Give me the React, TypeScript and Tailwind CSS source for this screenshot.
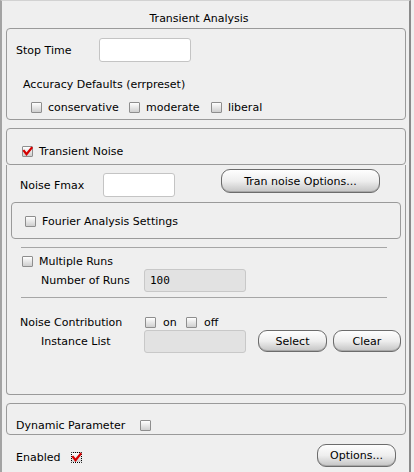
import React from "react";

function Check({ checked = false, focus = false }: { checked?: boolean; focus?: boolean }) {
  return (
    <span
      className={
        "relative inline-block w-[11px] h-[11px] shrink-0 rounded-[1px] bg-linear-to-b from-white to-[#cfcfcf] " +
        (focus ? "border border-dotted border-black" : "border border-[#8e8e8e]")
      }
    >
      {checked && (
        <svg className="absolute left-[-1px] top-[-1px]" width="11" height="11" viewBox="0 0 11 11">
          <path d="M2 5 L4.5 8.2 L9.5 2" fill="none" stroke="#d40000" strokeWidth="2.2" strokeLinecap="square" />
        </svg>
      )}
    </span>
  );
}

function Btn({ children, className = "" }: { children: React.ReactNode; className?: string }) {
  return (
    <div
      className={
        "flex items-center justify-center rounded-[9px] border border-[#6c6c6c] bg-linear-to-b from-[#fefefe] via-[#eeeeee] to-[#c4c4c4] shadow-[inset_0_-1px_0_#a8a8a8] " +
        className
      }
    >
      {children}
    </div>
  );
}

export default function App() {
  return (
    <div className="w-[414px] h-[472px] bg-[#efefef] font-['DejaVu_Sans',sans-serif] text-[11px] leading-[13px] text-black overflow-hidden">
      <div className="w-[411px] h-[472px] border-l-2 border-r-2 border-t border-l-[#a3a3a3] border-r-[#8a8a8a] border-t-[#d2d2d2] pl-[4px] pr-[3px] flex flex-col">
        {/* Title */}
        <div className="pt-[11px] h-[27px] text-center pr-[14px]">Transient Analysis</div>

        {/* Box 1 */}
        <div className="h-[92px] border border-[#9a9a9a] rounded-[4px] flex flex-col">
          <div className="mt-[9px] flex items-center h-[24px] pl-[9px]">
            <span className="w-[83px]">Stop Time</span>
            <div className="w-[92px] h-[24px] bg-white border border-[#c4c4c4] rounded-[3px]" />
          </div>
          <div className="mt-[16px] pl-[16px] h-[13px]">Accuracy Defaults (errpreset)</div>
          <div className="mt-[10px] pl-[24px] h-[13px] flex items-center">
            <div className="w-[98px] flex items-center gap-[6px]">
              <Check />
              <span>conservative</span>
            </div>
            <div className="w-[82px] flex items-center gap-[6px]">
              <Check />
              <span>moderate</span>
            </div>
            <div className="flex items-center gap-[6px]">
              <Check />
              <span>liberal</span>
            </div>
          </div>
        </div>

        {/* Transient Noise header */}
        <div className="mt-[8px] h-[37px] border border-[#9a9a9a] rounded-[4px] flex flex-col">
          <div className="mt-[16px] pl-[15px] h-[13px] flex items-center gap-[6px]">
            <Check checked />
            <span>Transient Noise</span>
          </div>
        </div>

        {/* Transient Noise body */}
        <div className="h-[230px] border-x border-b border-[#9a9a9a] rounded-b-[4px] flex flex-col">
          <div className="mt-[4px] h-[28px] flex items-start">
            <div className="mt-[4px] pl-[13px] flex items-center">
              <span className="w-[83px]">Noise Fmax</span>
              <div className="w-[72px] h-[24px] bg-white border border-[#c4c4c4] rounded-[3px]" />
            </div>
            <Btn className="ml-[46px] w-[159px] h-[24px]">Tran noise Options...</Btn>
          </div>

          <div className="mt-[5px] ml-[4px] w-[390px] h-[37px] border border-[#9a9a9a] rounded-[4px] flex flex-col">
            <div className="mt-[12px] pl-[13px] h-[13px] flex items-center gap-[6px]">
              <Check />
              <span>Fourier Analysis Settings</span>
            </div>
          </div>

          <div className="mt-[8px] ml-[14px] w-[366px] h-px bg-[#a6a6a6]" />

          <div className="mt-[7px] pl-[15px] h-[13px] flex items-center gap-[6px]">
            <Check />
            <span>Multiple Runs</span>
          </div>

          <div className="mt-[1px] pl-[34px] flex items-center h-[23px]">
            <span className="w-[103px]">Number of Runs</span>
            <div className="w-[102px] h-[23px] bg-[#e2e2e2] border border-[#c8c8c8] rounded-[3px] flex items-center pl-[5px] font-['DejaVu_Sans_Mono',monospace] text-[11px]">
              100
            </div>
          </div>

          <div className="mt-[5px] ml-[14px] w-[366px] h-px bg-[#a6a6a6]" />

          <div className="mt-[18px] pl-[13px] h-[13px] flex items-center">
            <span className="w-[125px]">Noise Contribution</span>
            <div className="w-[41px] flex items-center gap-[7px]">
              <Check />
              <span>on</span>
            </div>
            <div className="flex items-center gap-[7px]">
              <Check />
              <span>off</span>
            </div>
          </div>

          <div className="mt-[1px] pl-[34px] flex items-start h-[23px]">
            <span className="w-[103px] self-center">Instance List</span>
            <div className="w-[102px] h-[23px] bg-[#e2e2e2] border border-[#c8c8c8] rounded-[3px]" />
            <Btn className="ml-[12px] w-[69px] h-[22px]">Select</Btn>
            <Btn className="ml-[6px] w-[68px] h-[22px]">Clear</Btn>
          </div>
        </div>

        {/* Dynamic Parameter */}
        <div className="mt-[8px] h-[32px] border border-[#9a9a9a] rounded-[4px] flex flex-col">
          <div className="mt-[15px] pl-[9px] h-[13px] flex items-center">
            <span className="w-[124px]">Dynamic Parameter</span>
            <Check />
          </div>
        </div>

        {/* Enabled row */}
        <div className="mt-[9px] h-[23px] flex items-center">
          <div className="mt-[3px] pl-[10px] flex items-center">
            <span className="w-[55px]">Enabled</span>
            <Check checked focus />
          </div>
          <Btn className="ml-auto mr-[10px] w-[79px] h-[23px]">Options...</Btn>
        </div>
      </div>
    </div>
  );
}
